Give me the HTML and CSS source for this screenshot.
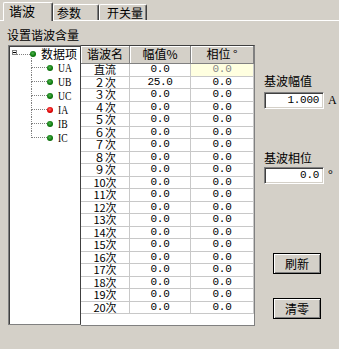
FILE: index.html
```html
<!DOCTYPE html>
<html lang="zh-CN">
<head>
<meta charset="utf-8">
<title>谐波</title>
<link rel="stylesheet" href="styles.css">
</head>
<body>
<div class="tabs">
  <div class="tab active">谐波</div>
  <div class="tab t2">参数</div>
  <div class="tab t3">开关量</div>
</div>
<div class="panel">
  <div class="caption">设置谐波含量</div>
  <div class="content">
    <div class="tree">
      <div class="root">
        <span class="expander"><span class="minus"></span></span>
        <span class="hline"></span>
        <span class="dot"></span>
        <span class="rlabel">数据项</span>
      </div>
      <div class="children">
        <div class="node"><span class="elbow"><span class="etop"></span><span class="ebot"></span></span><span class="dot"></span><span class="nlabel">UA</span></div>
        <div class="node"><span class="elbow"><span class="etop"></span><span class="ebot"></span></span><span class="dot"></span><span class="nlabel">UB</span></div>
        <div class="node"><span class="elbow"><span class="etop"></span><span class="ebot"></span></span><span class="dot"></span><span class="nlabel">UC</span></div>
        <div class="node"><span class="elbow"><span class="etop"></span><span class="ebot"></span></span><span class="dot red"></span><span class="nlabel">IA</span></div>
        <div class="node"><span class="elbow"><span class="etop"></span><span class="ebot"></span></span><span class="dot"></span><span class="nlabel">IB</span></div>
        <div class="node last"><span class="elbow"><span class="etop"></span><span class="ebot"></span></span><span class="dot"></span><span class="nlabel">IC</span></div>
      </div>
    </div>
    <div class="grid">
      <div class="hd">谐波名</div><div class="hd">幅值%</div><div class="hd">相位 °</div>
      <div class="c name">直流</div><div class="c num">0.0</div><div class="c num sel">0.0</div>
      <div class="c name">２次</div><div class="c num">25.0</div><div class="c num">0.0</div>
      <div class="c name">３次</div><div class="c num">0.0</div><div class="c num">0.0</div>
      <div class="c name">４次</div><div class="c num">0.0</div><div class="c num">0.0</div>
      <div class="c name">５次</div><div class="c num">0.0</div><div class="c num">0.0</div>
      <div class="c name">６次</div><div class="c num">0.0</div><div class="c num">0.0</div>
      <div class="c name">７次</div><div class="c num">0.0</div><div class="c num">0.0</div>
      <div class="c name">８次</div><div class="c num">0.0</div><div class="c num">0.0</div>
      <div class="c name">９次</div><div class="c num">0.0</div><div class="c num">0.0</div>
      <div class="c name">10次</div><div class="c num">0.0</div><div class="c num">0.0</div>
      <div class="c name">11次</div><div class="c num">0.0</div><div class="c num">0.0</div>
      <div class="c name">12次</div><div class="c num">0.0</div><div class="c num">0.0</div>
      <div class="c name">13次</div><div class="c num">0.0</div><div class="c num">0.0</div>
      <div class="c name">14次</div><div class="c num">0.0</div><div class="c num">0.0</div>
      <div class="c name">15次</div><div class="c num">0.0</div><div class="c num">0.0</div>
      <div class="c name">16次</div><div class="c num">0.0</div><div class="c num">0.0</div>
      <div class="c name">17次</div><div class="c num">0.0</div><div class="c num">0.0</div>
      <div class="c name">18次</div><div class="c num">0.0</div><div class="c num">0.0</div>
      <div class="c name">19次</div><div class="c num">0.0</div><div class="c num">0.0</div>
      <div class="c name">20次</div><div class="c num">0.0</div><div class="c num">0.0</div>
    </div>
    <div class="side">
      <div class="lbl l1">基波幅值</div>
      <div class="field f1"><div class="input">1.000</div><span class="unit">A</span></div>
      <div class="lbl l2">基波相位</div>
      <div class="field f2"><div class="input">0.0</div><span class="unit deg">°</span></div>
      <button class="btn b1">刷新</button>
      <button class="btn b2">清零</button>
    </div>
  </div>
</div>
</body>
</html>
```
FILE: styles.css
```css
* { box-sizing: border-box; }
html, body { margin: 0; padding: 0; }
body {
  width: 339px;
  height: 349px;
  overflow: hidden;
  background: #d4d0c8;
  color: #000;
  font-family: "Noto Sans CJK SC", "Noto Sans", sans-serif;
  font-size: 12px;
}

/* tabs */
.tabs {
  display: flex;
  align-items: flex-end;
  height: 21px;
  padding-left: 3px;
  border-bottom: 1px solid #fff;
}
.tab {
  height: 16px;
  line-height: 15px;
  border-top: 1px solid #fff;
  border-left: 1px solid #fff;
  border-right: 1px solid #404040;
  box-shadow: inset -1px 0 #808080;
  border-top-left-radius: 2px;
  border-top-right-radius: 2px;
  background: #d4d0c8;
}
.tab.active {
  width: 50px;
  height: 19px;
  margin-bottom: -1px;
  padding-left: 5px;
  line-height: 16px;
  font-size: 13px;
  position: relative;
  z-index: 1;
}
.tab.t2 { width: 46px; padding-left: 3px; }
.tab.t3 { width: 48px; padding-left: 7px; }

/* panel */
.panel { padding: 7px 0 0 7px; }
.caption { line-height: 14px; height: 14px; margin-bottom: 3px; }
.content { display: flex; align-items: flex-start; margin-left: 1px; }

/* tree */
.tree {
  width: 73px;
  height: 280px;
  background: #fff;
  border: 1px solid;
  border-color: #808080 #404040 #808080 #808080;
  box-shadow: inset 1px 1px #404040;
  padding-top: 1px;
  font-size: 12px;
}
.root {
  display: flex;
  align-items: center;
  height: 14px;
  padding-left: 3px;
}
.expander {
  width: 5px;
  height: 5px;
  border: 1px solid #808080;
  display: flex;
  align-items: center;
  justify-content: center;
  margin-top: -3px;
}
.minus { width: 3px; height: 1px; background: #000; display: block; }
.hline {
  width: 13px;
  border-top: 1px dotted #808080;
}
.dot {
  width: 6px;
  height: 6px;
  border-radius: 50%;
  background: radial-gradient(circle at 45% 40%, #4fb24f 0, #0c7a0c 55%, #064d06 100%);
  flex: none;
}
.dot.red {
  background: radial-gradient(circle at 45% 40%, #ff6a6a 0, #e00000 55%, #900000 100%);
}
.rlabel { margin-left: 5px; line-height: 14px; white-space: nowrap; }

.children { margin-left: 22px; }
.children::before {
  content: "";
  display: block;
  height: 3px;
  margin-top: -3px;
  border-left: 1px dotted #808080;
}
.node { display: flex; align-items: center; height: 14px; }
.elbow { display: flex; flex-direction: column; width: 16px; height: 14px; }
.etop { height: 7px; border-left: 1px dotted #808080; border-bottom: 1px dotted #808080; }
.ebot { height: 7px; border-left: 1px dotted #808080; }
.node.last .ebot { border-left: 0; }
.nlabel {
  margin-left: 5px;
  font-family: "Liberation Serif", serif;
  font-size: 12px;
  transform: scaleX(0.8);
  transform-origin: left center;
  line-height: 14px;
}

/* grid */
.grid {
  display: grid;
  grid-template-columns: 49px 61px 63px;
  grid-template-rows: 18px;
  grid-auto-rows: 12.5px;
  width: 174px;
  height: 281px;
  background: #fff;
  border-top: 1px solid #404040;
  border-right: 1px solid #808080;
  border-bottom: 1px solid #808080;
}
.hd {
  background: #d4d0c8;
  border-right: 1px solid #808080;
  border-bottom: 1px solid #808080;
  box-shadow: inset 1px 1px #fff;
  text-align: center;
  line-height: 16px;
  white-space: nowrap;
}
.c {
  border-right: 1px solid #c8c8c8;
  border-bottom: 1px solid #c8c8c8;
  text-align: center;
  white-space: nowrap;
}
.name { font-size: 11px; line-height: 11.5px; }
.num {
  font-family: "Liberation Mono", monospace;
  font-size: 11px;
  letter-spacing: -0.3px;
  line-height: 11.5px;
}
.sel { background: #ffffe0; color: #888; }

/* side */
.side { display: flex; flex-direction: column; align-items: flex-start; margin-left: 9px; }
.lbl { line-height: 14px; height: 14px; }
.l1 { margin-top: 29px; }
.l2 { margin-top: 42px; }
.field { display: flex; align-items: center; }
.f1 { margin-top: 4px; }
.f2 { margin-top: 2px; }
.input {
  width: 60px;
  height: 17px;
  background: #fff;
  border: 1px solid;
  border-color: #808080 #fff #fff #808080;
  box-shadow: inset 1px 1px #404040, inset -1px -1px #d4d0c8;
  text-align: right;
  padding-right: 4px;
  font-family: "Liberation Mono", monospace;
  font-size: 11px;
  letter-spacing: -0.3px;
  line-height: 15px;
}
.unit {
  margin-left: 4px;
  font-family: "Liberation Serif", serif;
  font-size: 12px;
}
.unit.deg { margin-top: -2px; }
.btn {
  width: 48px;
  height: 21px;
  margin-left: 9px;
  padding: 0;
  background: #d4d0c8;
  border: 1px solid #000;
  box-shadow: inset 1px 1px #fff, inset -1px -1px #808080;
  font-family: "Noto Sans CJK SC", sans-serif;
  font-size: 12px;
  line-height: 17px;
  color: #000;
}
.b1 { margin-top: 69px; }
.b2 { margin-top: 24px; }
```
